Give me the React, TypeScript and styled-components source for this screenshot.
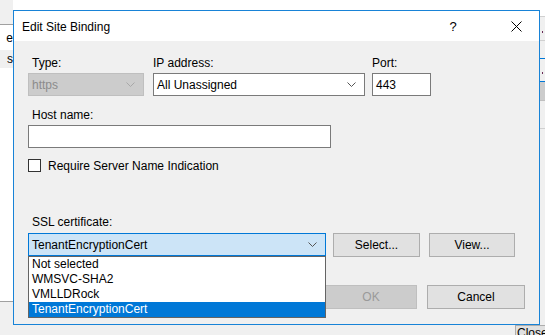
import React from 'react';
import styled, { createGlobalStyle, css } from 'styled-components';

const GlobalStyle = createGlobalStyle`
  html, body {
    margin: 0;
    padding: 0;
    background: #ffffff;
  }
  body {
    font-family: 'Liberation Sans', Arial, sans-serif;
    font-size: 12px;
    color: #000;
  }
`;

const Screen = styled.div`
  position: relative;
  width: 545px;
  height: 335px;
  overflow: hidden;
  background: #fff;
`;

// the window that sits behind the dialog
const BackWindow = styled.div`
  display: flex;
  flex-direction: column;
  height: 100%;
`;

const BackMain = styled.div`
  flex: 1;
  display: flex;
`;

const LeftPane = styled.div`
  width: 13px;
  display: flex;
  flex-direction: column;
  overflow: hidden;
`;

const MiddlePane = styled.div`
  flex: 1;
`;

const RightPane = styled.div`
  width: 6px;
  display: flex;
  flex-direction: column;
  overflow: hidden;
  background: #f0f0f0;
`;

const Band = styled.div<{ h: number; bg?: string; line?: string }>`
  height: ${(p) => p.h}px;
  flex: ${(p) => (p.h === 0 ? 1 : 'none')};
  background: ${(p) => p.bg || '#fff'};
  border-bottom: ${(p) => (p.line ? `1px solid ${p.line}` : 'none')};
  display: flex;
  align-items: center;
  justify-content: flex-end;
  white-space: nowrap;
  font-size: 12px;
`;

// the "..." of a clipped browse button, only two dots show
const Dots = styled.span`
  display: flex;
  gap: 2px;
  width: 6px;
  margin-top: 6px;
  &::before,
  &::after {
    content: '';
    width: 1px;
    height: 2px;
    background: #6a2a55;
  }
`;

const BottomStrip = styled.div`
  height: 10px;
  background: #f0f0f0;
  display: flex;
  justify-content: flex-end;
  overflow: hidden;
`;

const CloseButton = styled.div`
  width: 28px;
  height: 100%;
  border-left: 1px solid #adadad;
  border-top: 1px solid #adadad;
  background: #e1e1e1;
  padding-left: 1px;
  line-height: 15px;
  white-space: nowrap;
  overflow: hidden;
`;

const Dialog = styled.div`
  position: absolute;
  left: 13px;
  top: 10px;
  width: 525px;
  height: 313px;
  border: 1px solid #1883d7;
  display: flex;
  flex-direction: column;
  background: #f0f0f0;
`;

const TitleBar = styled.div`
  height: 30px;
  background: #fff;
  display: flex;
  align-items: center;
  padding-left: 8px;
`;

const Title = styled.div`
  flex: 1;
  font-size: 12px;
  padding-top: 2px;
`;

const CaptionButton = styled.div<{ w: number }>`
  width: ${(p) => p.w}px;
  height: 30px;
  display: flex;
  align-items: center;
  justify-content: center;
  font-size: 13px;
`;

const Body = styled.div`
  flex: 1;
  padding: 14px 14px 0 14px;
  display: flex;
  flex-direction: column;
`;

const Row = styled.div<{ gap?: number; mt?: number }>`
  display: flex;
  align-items: flex-end;
  gap: ${(p) => p.gap || 0}px;
  margin-top: ${(p) => p.mt || 0}px;
`;

const Field = styled.div<{ w: number; ml?: number }>`
  width: ${(p) => p.w}px;
  margin-left: ${(p) => p.ml || 0}px;
  display: flex;
  flex-direction: column;
  position: relative;
`;

const Label = styled.div<{ indent?: boolean; mb?: number }>`
  height: 16px;
  line-height: 17px;
  padding-left: ${(p) => (p.indent ? 4 : 0)}px;
  margin-bottom: ${(p) => p.mb ?? 2}px;
  white-space: nowrap;
`;

const Box = styled.div<{ variant?: 'normal' | 'disabled' | 'focused' }>`
  box-sizing: border-box;
  height: 23px;
  border: 1px solid #7a7a7a;
  background: #fff;
  display: flex;
  align-items: center;
  padding: 0 8px 0 3px;
  ${(p) =>
    p.variant === 'disabled' &&
    css`
      background: #cccccc;
      border-color: #bfbfbf;
      color: #8b8b8b;
    `}
  ${(p) =>
    p.variant === 'focused' &&
    css`
      background: #cce4f7;
      border-color: #0078d7;
    `}
`;

const BoxText = styled.span`
  flex: 1;
  white-space: nowrap;
`;

const CheckRow = styled.label`
  display: flex;
  align-items: center;
  gap: 7px;
  height: 17px;
  margin-top: 9px;
`;

const CheckBox = styled.span`
  box-sizing: border-box;
  width: 13px;
  height: 13px;
  border: 1px solid #333;
  background: #fff;
`;

const Button = styled.div<{ w: number; disabled?: boolean }>`
  box-sizing: border-box;
  width: ${(p) => p.w}px;
  height: 24px;
  border: 1px solid #adadad;
  background: #e1e1e1;
  display: flex;
  align-items: center;
  justify-content: center;
  ${(p) =>
    p.disabled &&
    css`
      background: #cccccc;
      border-color: #bfbfbf;
      color: #9a9a9a;
    `}
`;

const SideButtons = styled.div`
  display: flex;
  margin-bottom: -1px;
  gap: 9px;
`;

const Footer = styled.div`
  display: flex;
  justify-content: flex-end;
  gap: 10px;
  margin-top: 29px;
`;

const DropList = styled.div`
  position: absolute;
  left: 0;
  top: 42px;
  width: 298px;
  box-sizing: border-box;
  border: 1px solid #646464;
  background: #fff;
  z-index: 2;
`;

const Option = styled.div<{ selected?: boolean }>`
  height: 15px;
  line-height: 15px;
  padding-left: 3px;
  white-space: nowrap;
  ${(p) =>
    p.selected &&
    css`
      background: #0078d7;
      color: #fff;
    `}
`;

const Chevron = ({ color = '#555' }: { color?: string }) => (
  <svg width="9" height="5" viewBox="0 0 9 5">
    <path d="M0.5 0.5 L4.5 4.5 L8.5 0.5" fill="none" stroke={color} strokeWidth="1" />
  </svg>
);

const CloseIcon = () => (
  <svg width="11" height="11" viewBox="0 0 11 11">
    <path d="M0.5 0.5 L10.5 10.5 M10.5 0.5 L0.5 10.5" stroke="#000" strokeWidth="1" />
  </svg>
);

const certificates = ['Not selected', 'WMSVC-SHA2', 'VMLLDRock', 'TenantEncryptionCert'];

const App = () => {
  return (
    <>
      <GlobalStyle />
      <Screen>
        <BackWindow>
          <BackMain>
            <LeftPane>
              <Band h={24} bg="#f0f0f0" line="#a0a0a0" />
              <Band h={25}>e</Band>
              <Band h={18} bg="#f0f0f0">s</Band>
              <Band h={0} line="#a0a0a0" />
              <Band h={23} bg="#f0f0f0" />
            </LeftPane>
            <MiddlePane />
            <RightPane>
              <Band h={16} line="#d0d0d0" />
              <Band h={23} bg="#f0f0f0" line="#d0d0d0">
                <Dots />
              </Band>
              <Band h={17} bg="#f0f0f0" line="#0078d7" />
              <Band h={22} bg="#f0f0f0" line="#0078d7">
                <Dots />
              </Band>
              <Band h={18} bg="#cccccc" line="#bfbfbf" />
              <Band h={27} bg="#f0f0f0" line="#d0d0d0" />
              <Band h={0} bg="#f0f0f0" />
            </RightPane>
          </BackMain>
          <BottomStrip>
            <CloseButton>Close</CloseButton>
          </BottomStrip>
        </BackWindow>

        <Dialog>
          <TitleBar>
            <Title>Edit Site Binding</Title>
            <CaptionButton w={46}>?</CaptionButton>
            <CaptionButton w={18} />
            <CaptionButton w={45}>
              <CloseIcon />
            </CaptionButton>
          </TitleBar>
          <Body>
            <Row>
              <Field w={116}>
                <Label indent>Type:</Label>
                <Box variant="disabled">
                  <BoxText>https</BoxText>
                  <Chevron color="#a8a8a8" />
                </Box>
              </Field>
              <Field w={212} ml={9}>
                <Label>IP address:</Label>
                <Box>
                  <BoxText>All Unassigned</BoxText>
                  <Chevron />
                </Box>
              </Field>
              <Field w={59} ml={7}>
                <Label>Port:</Label>
                <Box>
                  <BoxText>443</BoxText>
                </Box>
              </Field>
            </Row>
            <Row mt={11}>
              <Field w={303}>
                <Label indent>Host name:</Label>
                <Box />
              </Field>
            </Row>
            <CheckRow>
              <CheckBox />
              Require Server Name Indication
            </CheckRow>
            <Row mt={40} gap={7}>
              <Field w={298}>
                <Label indent mb={3}>
                  SSL certificate:
                </Label>
                <Box variant="focused">
                  <BoxText>TenantEncryptionCert</BoxText>
                  <Chevron />
                </Box>
                <DropList>
                  {certificates.map((c, i) => (
                    <Option key={c} selected={i === certificates.length - 1}>
                      {c}
                    </Option>
                  ))}
                </DropList>
              </Field>
              <SideButtons>
                <Button w={87}>Select...</Button>
                <Button w={86}>View...</Button>
              </SideButtons>
            </Row>
            <Footer>
              <Button w={92} disabled>
                OK
              </Button>
              <Button w={98}>Cancel</Button>
            </Footer>
          </Body>
        </Dialog>
      </Screen>
    </>
  );
};

export default App;
